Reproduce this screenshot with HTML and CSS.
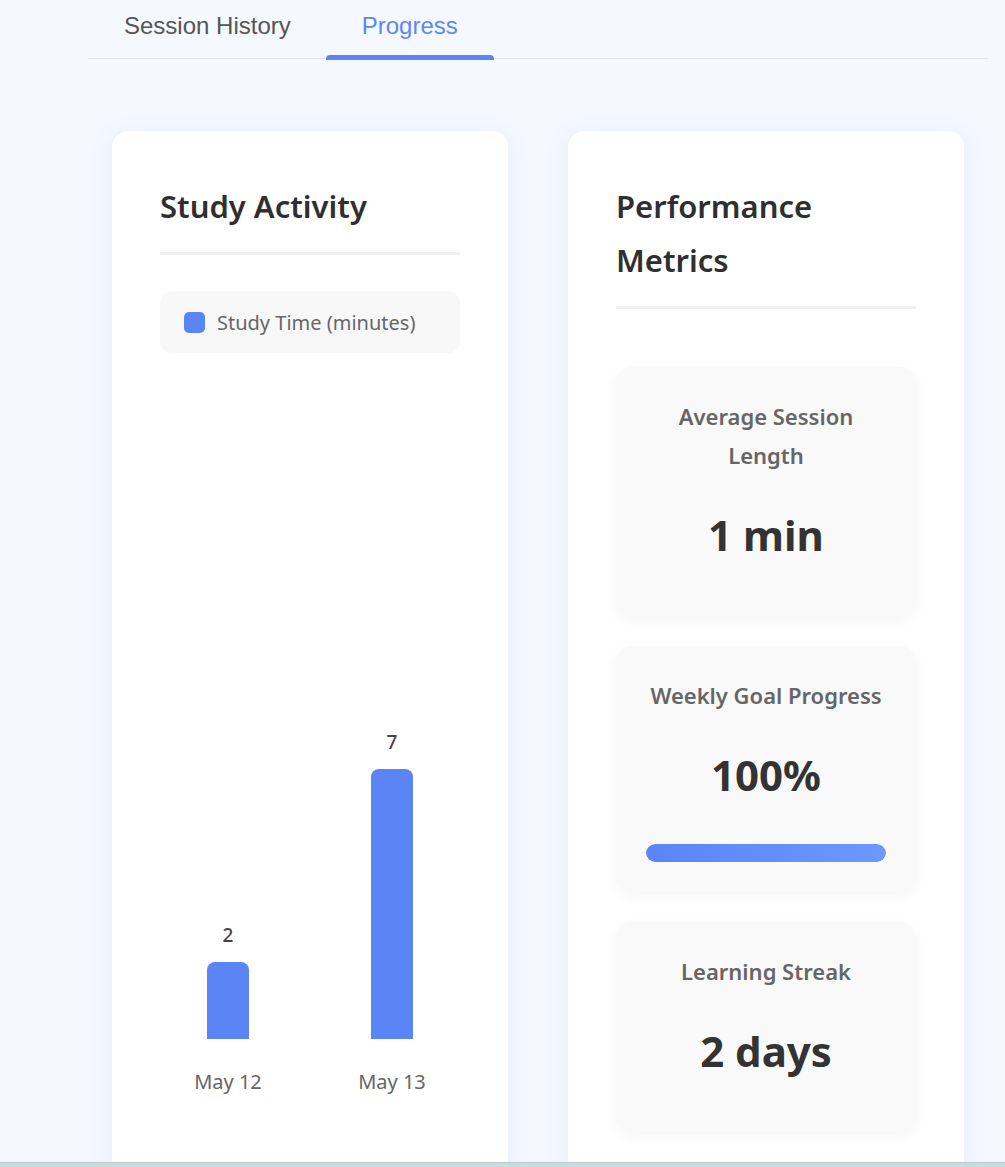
FILE: index.html
```html
<!DOCTYPE html>
<html lang="en">
<head>
<meta charset="utf-8">
<title>Progress</title>
<link rel="stylesheet" href="styles.css">
</head>
<body>
<nav class="tabs">
  <div class="tab">Session History</div>
  <div class="tab active">Progress</div>
</nav>
<main class="content">
  <section class="card">
    <h2 class="card-title">Study Activity</h2>
    <div class="legend">
      <span class="legend-swatch"></span>
      <span class="legend-text">Study Time (minutes)</span>
    </div>
    <div class="chart">
      <div class="chart-item">
        <div class="chart-value">2</div>
        <div class="chart-bar" style="height:77px"></div>
        <div class="chart-label">May 12</div>
      </div>
      <div class="chart-item">
        <div class="chart-value">7</div>
        <div class="chart-bar" style="height:270px"></div>
        <div class="chart-label">May 13</div>
      </div>
    </div>
  </section>
  <section class="card">
    <h2 class="card-title">Performance Metrics</h2>
    <div class="metrics">
      <div class="metric">
        <div class="metric-label">Average Session Length</div>
        <div class="metric-value">1 min</div>
      </div>
      <div class="metric">
        <div class="metric-label">Weekly Goal Progress</div>
        <div class="metric-value">100%</div>
        <div class="progress"><div class="progress-fill" style="width:100%"></div></div>
      </div>
      <div class="metric">
        <div class="metric-label">Learning Streak</div>
        <div class="metric-value">2 days</div>
      </div>
    </div>
  </section>
</main>
<div class="window-edge"></div>
</body>
</html>
```
FILE: styles.css
```css
html, body {
  margin: 0;
  padding: 0;
}
body {
  background: #f5f8ff;
  font-family: "Noto Sans", "Open Sans", sans-serif;
  color: #333;
  overflow: hidden;
  height: 1167px;
}
.tabs {
  display: flex;
  margin-left: 88px;
  width: 900px;
  border-bottom: 1px solid #dfe3ea;
  font-family: "Liberation Sans", Arial, sans-serif;
}
.tab {
  position: relative;
  padding: 12px 36px 18px;
  font-size: 24px;
  line-height: 28px;
  color: #555;
}
.tab:first-child {
  padding-right: 35px;
}
.tab.active {
  color: #5d87f5;
}
.tab.active::after {
  content: "";
  position: absolute;
  left: 0;
  right: 0;
  bottom: -2px;
  height: 5px;
  background: #5b85f5;
  border-radius: 4px 4px 0 0;
}
.content {
  display: flex;
  gap: 60px;
  padding: 72px 0 0 112px;
}
.card {
  width: 300px;
  padding: 48px;
  background: #fff;
  border-radius: 16px;
  box-shadow: 0 4px 24px rgba(80, 110, 200, 0.09);
  flex-shrink: 0;
}
.card-title {
  margin: 0;
  font-size: 31px;
  line-height: 54px;
  font-weight: 600;
  color: #2f2f2f;
  padding-bottom: 19px;
  border-bottom: 3px solid #f0f0f0;
}
.legend {
  margin-top: 36px;
  height: 62px;
  box-sizing: border-box;
  padding: 0 24px;
  display: flex;
  align-items: center;
  gap: 12px;
  background: #f8f8f8;
  border-radius: 12px;
}
.legend-swatch {
  width: 21px;
  height: 21px;
  border-radius: 5px;
  background: #5b85f5;
}
.legend-text {
  font-size: 20px;
  color: #666;
}
.chart {
  margin-top: 40px;
  height: 706px;
  display: flex;
  justify-content: center;
  align-items: flex-end;
  gap: 64px;
}
.chart-item {
  width: 100px;
  display: flex;
  flex-direction: column;
  align-items: center;
}
.chart-value {
  font-size: 19px;
  line-height: 30px;
  font-weight: 500;
  color: #444;
  margin-bottom: 12px;
}
.chart-bar {
  width: 42px;
  background: #5b85f5;
  border-radius: 8px 8px 0 0;
}
.chart-label {
  margin-top: 26px;
  font-size: 20px;
  line-height: 34px;
  color: #666;
}
.metrics {
  margin-top: 58px;
  display: flex;
  flex-direction: column;
  gap: 30px;
}
.metric {
  background: #f9f9f9;
  border-radius: 16px;
  padding: 30px;
  text-align: center;
  box-shadow: 0 4px 14px rgba(0, 0, 0, 0.045);
}
.metric-label {
  font-size: 22px;
  line-height: 39px;
  font-weight: 600;
  color: #666;
}
.metric-value {
  margin: 21px 0 12px;
  font-size: 42px;
  line-height: 78px;
  font-weight: 700;
  color: #333;
}
.progress {
  margin-top: 30px;
  height: 18px;
  border-radius: 9px;
  background: #e6ebf5;
  overflow: hidden;
}
.progress-fill {
  height: 100%;
  border-radius: 9px;
  background: linear-gradient(90deg, #5b85f5, #6c98ff);
}
.window-edge {
  position: fixed;
  left: 0;
  right: 0;
  bottom: 0;
  height: 4px;
  background: #c9dcdd;
  border-top: 1px solid #b8cccd;
}
```
